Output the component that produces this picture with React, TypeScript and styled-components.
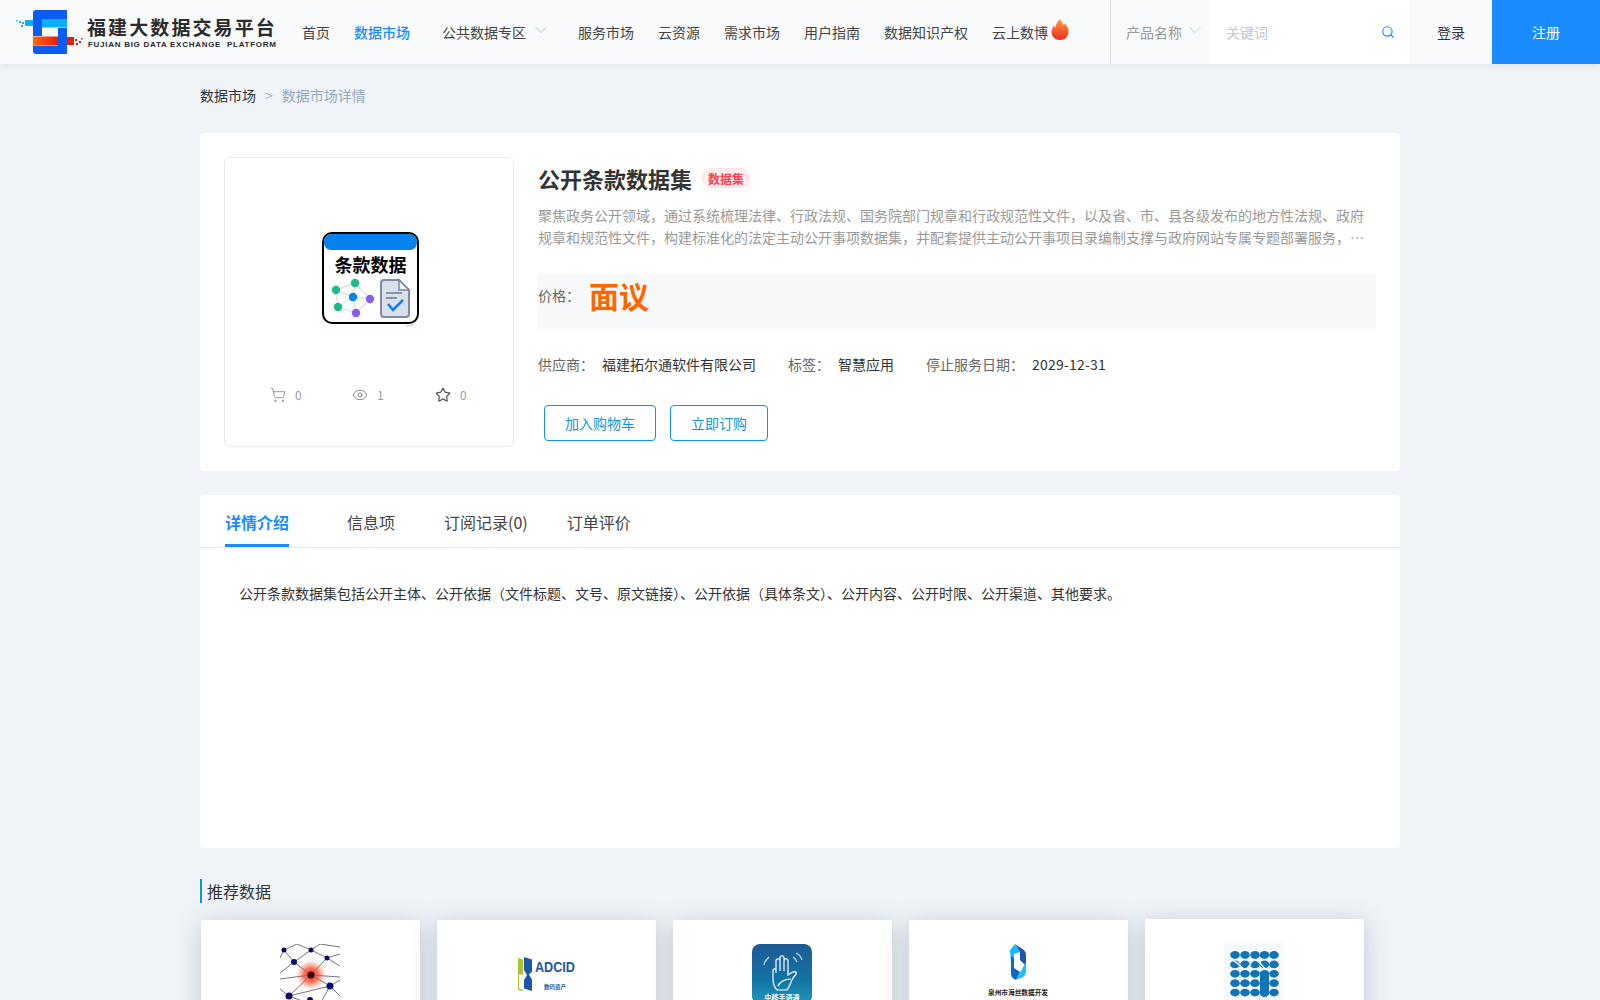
import React from 'react'
import styled, { createGlobalStyle } from 'styled-components'
import { ChevronDown, Eye, Search, ShoppingCart, Star } from 'lucide-react'

const GlobalStyle = createGlobalStyle`
  html, body {
    margin: 0;
    padding: 0;
    overflow: hidden;
    background: #f0f4f8;
    font-family: "Noto Sans CJK SC", "Noto Sans", sans-serif;
    color: #333;
  }
  * {
    box-sizing: border-box;
  }
`

const Page = styled.div`
  height: 1000px;
  overflow: hidden;
`

const Header = styled.header`
  display: flex;
  align-items: stretch;
  height: 64px;
  background: #f9fafc;
  box-shadow: 0 2px 6px rgba(60, 80, 110, 0.08);
  position: relative;
  z-index: 2;
`

const Logo = styled.div`
  display: flex;
  align-items: center;
  width: 302px;
  padding-left: 16px;
  flex: none;
`

const LogoText = styled.div`
  margin-left: 3px;
  display: flex;
  flex-direction: column;
  margin-top: 2px;
`

const LogoTitle = styled.div`
  font-size: 19px;
  line-height: 22px;
  font-weight: 700;
  letter-spacing: 2.1px;
  color: #2b2b2b;
  white-space: nowrap;
`

const LogoSub = styled.div`
  font-family: "Liberation Sans", sans-serif;
  font-size: 8px;
  line-height: 10px;
  font-weight: 700;
  letter-spacing: 0.72px;
  color: #2b2b2b;
  white-space: pre;
  margin-top: 2px;
  margin-left: 1px;
`

const Nav = styled.nav`
  display: flex;
  align-items: center;
  width: 808px;
  flex: none;
`

const NavItem = styled.a<{ $active?: boolean; $gap?: number }>`
  display: flex;
  align-items: center;
  font-size: 14px;
  font-weight: ${({ $active }) => ($active ? 500 : 400)};
  color: ${({ $active }) => ($active ? '#1a8cff' : '#444')};
  margin-right: ${({ $gap }) => $gap ?? 24}px;
  white-space: nowrap;
`

const NavChevron = styled(ChevronDown)`
  margin-left: 5px;
  margin-top: -5px;
  color: #b0b4ba;
`

const FlameWrap = styled.span`
  display: flex;
  margin: -4px 0 0 2px;
`

const SearchArea = styled.div`
  display: flex;
  flex: none;
  width: 300px;
  align-items: stretch;
  border-left: 1px solid #dfe2e6;
`

const SelectBox = styled.div`
  display: flex;
  align-items: center;
  width: 99px;
  padding-left: 15px;
  font-size: 14px;
  color: #999;
  flex: none;
`

const SelectChevron = styled(ChevronDown)`
  margin-left: 3px;
  margin-top: -4px;
  color: #b8bcc2;
`

const KeywordBox = styled.div`
  flex: 1;
  display: flex;
  align-items: center;
  justify-content: space-between;
  background: #fff;
  padding: 0 15px 0 16px;
  font-size: 14px;
  color: #c4c7cc;
`

const LoginLink = styled.a`
  flex: none;
  width: 82px;
  display: flex;
  align-items: center;
  justify-content: center;
  font-size: 14px;
  color: #333;
`

const RegisterLink = styled.a`
  flex: none;
  width: 108px;
  display: flex;
  align-items: center;
  justify-content: center;
  font-size: 14px;
  color: #fff;
  background: #1a8cff;
`

const Main = styled.main`
  width: 1200px;
  margin: 0 auto;
`

const Breadcrumb = styled.div`
  display: flex;
  align-items: center;
  height: 20px;
  margin: 21px 0 28px;
  font-size: 14px;
  color: #333;
`

const CrumbSep = styled.span`
  margin: 0 9px;
  color: #a8b4c2;
`

const CrumbCurrent = styled.span`
  color: #97a8be;
`

const DetailCard = styled.section`
  display: flex;
  gap: 24px;
  height: 338px;
  padding: 24px;
  background: #fff;
  border-radius: 4px;
`

const Gallery = styled.div`
  flex: none;
  width: 290px;
  height: 290px;
  border: 1px solid #e8eaed;
  border-radius: 6px;
  display: flex;
  flex-direction: column;
  align-items: center;
  padding-top: 66px;
`

const ImageFrame = styled.div`
  display: flex;
  margin-left: 4px;
`

const Stats = styled.div`
  display: flex;
  margin-top: 57px;
  width: 100%;
  padding-left: 45px;
`

const Stat = styled.div<{ $width: number }>`
  display: flex;
  align-items: center;
  width: ${({ $width }) => $width}px;
  font-size: 12px;
  color: #999;
  line-height: 16px;

  svg {
    margin-right: 9px;
    flex: none;
  }
`

const Info = styled.div`
  flex: 1;
  min-width: 0;
`

const TitleRow = styled.div`
  display: flex;
  align-items: center;
  height: 42px;
`

const Title = styled.h1`
  margin: 0;
  font-size: 22px;
  line-height: 30px;
  font-weight: 700;
  color: #333;
`

const Badge = styled.span`
  margin-left: 10px;
  width: 48px;
  height: 20px;
  display: flex;
  align-items: center;
  justify-content: center;
  border-radius: 10px;
  background: #ffecee;
  border: 1px solid #ffe0e3;
  color: #f5414d;
  font-size: 12px;
  font-weight: 700;
`

const Description = styled.p`
  margin: 6px 0 0;
  font-size: 14px;
  line-height: 21.5px;
  height: 43px;
  color: #999;
  display: -webkit-box;
  -webkit-line-clamp: 2;
  -webkit-box-orient: vertical;
  overflow: hidden;
`

const PriceBox = styled.div`
  display: flex;
  align-items: flex-start;
  height: 55px;
  margin-top: 26px;
  background: #f7f8fa;
`

const PriceLabel = styled.span`
  font-size: 14px;
  line-height: 20px;
  margin-top: 11px;
  width: 51px;
  color: #666;
`

const PriceValue = styled.span`
  font-size: 30px;
  line-height: 40px;
  margin-top: 1px;
  font-weight: 700;
  color: #ff6600;
`

const MetaRow = styled.div`
  display: flex;
  margin-top: 25px;
  font-size: 14px;
  line-height: 20px;
`

const MetaLabel = styled.span<{ $width: number }>`
  width: ${({ $width }) => $width}px;
  color: #666;
  flex: none;
`

const MetaValue = styled.span<{ $gap: number }>`
  margin-right: ${({ $gap }) => $gap}px;
  color: #333;
`

const DateValue = styled.span`
  color: #333;
  letter-spacing: 0.2px;
`

const Actions = styled.div`
  display: flex;
  gap: 14px;
  margin: 31px 0 0 6px;
`

const OutlineButton = styled.button<{ $width: number }>`
  width: ${({ $width }) => $width}px;
  height: 36px;
  padding: 0;
  background: #fff;
  border: 1px solid #0d95d8;
  border-radius: 4px;
  color: #0d95d8;
  font-family: inherit;
  font-size: 14px;
`

const TabsCard = styled.section`
  height: 353px;
  margin-top: 24px;
  background: #fff;
  border-radius: 4px;
`

const TabBar = styled.div`
  display: flex;
  height: 53px;
  padding-left: 25px;
  border-bottom: 1px solid #e6e8eb;
`

const Tab = styled.div<{ $active?: boolean; $gap: number }>`
  height: 52px;
  margin-right: ${({ $gap }) => $gap}px;
  padding-top: 15px;
  font-size: 16px;
  line-height: 24px;
  font-weight: ${({ $active }) => ($active ? 700 : 400)};
  color: ${({ $active }) => ($active ? '#1a8cff' : '#444')};
  border-bottom: 3px solid ${({ $active }) => ($active ? '#1a8cff' : 'transparent')};
`

const TabBody = styled.div`
  padding: 35px 39px 0;
  font-size: 14px;
  line-height: 20px;
  color: #333;
`

const SectionTitle = styled.h2`
  margin: 31px 0 0;
  height: 24px;
  padding-left: 5px;
  border-left: 2px solid #0d95d8;
  font-size: 16px;
  line-height: 24px;
  font-weight: 400;
  color: #333;
`

const RecommendGrid = styled.div`
  display: grid;
  grid-template-columns: repeat(5, 218.6px);
  column-gap: 17.4px;
  margin: 17px 0 0 1px;
`

const RecommendCard = styled.div<{ $raised?: boolean }>`
  height: 240px;
  padding-top: 24px;
  display: flex;
  justify-content: center;
  background: #fff;
  box-shadow: 0 4px 24px rgba(90, 105, 135, 0.32);
  transform: translateY(${({ $raised }) => ($raised ? -1 : 0)}px);
`

const LogoMark = () => (
  <svg width="68" height="44" viewBox="0 0 68 44">
    <defs>
      <linearGradient id="orange" x1="0" x2="1" y1="0" y2="0">
        <stop offset="0" stopColor="#ff6a00" />
        <stop offset="1" stopColor="#f01800" />
      </linearGradient>
    </defs>
    <path d="M17 3a3 3 0 0 1 3-3H51V9H26V26H17z" fill="#0a5cf5" />
    <rect x="26" y="9" width="25" height="8.500" fill="#0ab0ff" />
    <rect x="42" y="18" width="9" height="26" fill="#0a5cf5" />
    <rect x="17" y="26.500" width="25" height="8.500" fill="url(#orange)" />
    <path d="M17 35.500H51V44H20a3 3 0 0 1-3-3z" fill="#0a5cf5" />
    <rect x="9" y="10" width="8" height="6" fill="#0ab0ff" />
    <rect x="6" y="12" width="2" height="2" fill="#0ab0ff" />
    <rect x="3" y="11" width="2" height="2" fill="#0ab0ff" />
    <rect x="0" y="10" width="1.500" height="1.500" fill="#0ab0ff" />
    <rect x="5" y="15" width="2" height="2" fill="#0ab0ff" />
    <rect x="51" y="27" width="7" height="8" fill="#f01800" />
    <rect x="59" y="29" width="2" height="2" fill="#f01800" />
    <rect x="60" y="33" width="2" height="2" fill="#f01800" />
    <rect x="63" y="31" width="2" height="2" fill="#f01800" />
    <rect x="65" y="28" width="1.500" height="1.500" fill="#f01800" />
  </svg>
)

const Flame = () => (
  <svg width="20" height="24" viewBox="0 0 20 24">
    <defs>
      <linearGradient id="flame" x1="0" x2="0" y1="0" y2="1">
        <stop offset="0" stopColor="#ff9a3c" />
        <stop offset="1" stopColor="#ee2a24" />
      </linearGradient>
    </defs>
    <path
      d="M10.500 1c.8 3.500 2.500 4.500 3.500 6.500.5-.8.6-1.500.6-2.400 2.500 2.500 3.900 5.500 3.900 8.400 0 5-3.700 8.500-8.500 8.500S1.500 18.500 1.500 14c0-2.900 1.600-4.700 2.800-6.500.3 1 .7 1.800 1.400 2.300C5.600 6.500 7.500 3 10.500 1z"
      fill="url(#flame)"
    />
  </svg>
)

const ProductImage = () => (
  <svg width="106" height="106" viewBox="0 0 106 106">
    <rect width="106" height="106" fill="#fdfefb" />
    <rect x="5" y="9" width="95" height="90" rx="9" fill="#fff" stroke="#000" strokeWidth="2" />
    <path d="M6 18a8 8 0 0 1 8-8h77a8 8 0 0 1 8 8v1a7 7 0 0 1-7 7H13a7 7 0 0 1-7-7z" fill="#0582ee" />
    <text x="52.500" y="47.500" textAnchor="middle" fontSize="18" fontWeight="700" fill="#000" fontFamily="Noto Sans CJK SC, sans-serif">
      条款数据
    </text>
    <path
      d="M37 59 L18 66 L20 83 L38 89 L52 75 L37 59 M18 66 L35 73 M37 59 L35 73 M20 83 L35 73 M38 89 L35 73 M52 75 L35 73"
      stroke="#dbe4f2"
      strokeWidth="1.500"
      fill="none"
    />
    <circle cx="37" cy="59" r="4.200" fill="#1dbb8c" />
    <circle cx="18" cy="66" r="4.200" fill="#1dbb8c" />
    <circle cx="20" cy="83" r="4.200" fill="#1dbb8c" />
    <circle cx="35" cy="73" r="4.200" fill="#0582ee" />
    <circle cx="52" cy="75" r="4.200" fill="#8b5cf0" />
    <circle cx="38" cy="89" r="4.200" fill="#8b5cf0" />
    <path d="M66 56h15l10 10v24a3 3 0 0 1-3 3H66a3 3 0 0 1-3-3V59a3 3 0 0 1 3-3z" fill="#d9dfeb" stroke="#7f8ba0" strokeWidth="2" />
    <path d="M81 56v10h10z" fill="#eef1f6" stroke="#7f8ba0" strokeWidth="1.500" />
    <path d="M68 69h16M68 74h11" stroke="#6f7b90" strokeWidth="1.500" />
    <path d="M70 80l5 6 10-10" stroke="#0582ee" strokeWidth="2.500" fill="none" />
    <path d="M88 102q6 0 9-3" stroke="#dbe4ea" strokeWidth="2" fill="none" />
  </svg>
)

const networkNodes: [number, number, number][] = [
  [4, 6, 2.5], [31, 6, 2.5], [14, 18, 3], [47, 14, 2.5], [31, 31, 3.5], [50, 42, 3.5], [9, 52, 3.5], [30, 56, 3],
]

const NetworkThumb = () => (
  <svg width="60" height="60" viewBox="0 0 60 60">
    <defs>
      <radialGradient id="glow">
        <stop offset="0" stopColor="#ff2000" />
        <stop offset="0.5" stopColor="#ff5a40" stopOpacity="0.8" />
        <stop offset="1" stopColor="#ff8a80" stopOpacity="0" />
      </radialGradient>
    </defs>
    <circle cx="31" cy="31" r="15" fill="url(#glow)" />
    <path
      d="M0 14 L4 6 L14 18 L31 6 L47 14 L60 10 M4 6 L17 0 L31 6 L40 0 L60 3 M14 18 L31 31 L47 14 L60 22 M0 29 L14 18 M0 35 L31 31 L60 33 M31 31 L50 42 L60 36 M50 42 L60 52 M31 31 L9 52 L0 45 M9 52 L50 42 M9 52 L30 60 M50 42 L40 60"
      stroke="#777"
      strokeWidth="1"
      fill="none"
    />
    {networkNodes.map(([cx, cy, r]) => (
      <circle key={`${cx}-${cy}`} cx={cx} cy={cy} r={r} fill={cx === 31 && cy === 31 ? '#300' : '#0a0a70'} />
    ))}
  </svg>
)

const AdcidThumb = () => (
  <svg width="60" height="60" viewBox="0 0 60 60">
    <path d="M2 14l5 1.500v15H3v14l4 1.500v1L2 46z" fill="#a9c52b" />
    <path d="M8 13l8 2.500v12l-3 3 3 5V47l-8-2.500V36l3-5-3-5z" fill="#1d57a5" />
    <text x="19" y="28" fontSize="14" fontWeight="700" fill="#1d57a5" fontFamily="Liberation Sans, sans-serif" textLength="40" lengthAdjust="spacingAndGlyphs">
      ADCID
    </text>
    <text x="28" y="44.500" fontSize="5.500" fontWeight="700" fill="#1d57a5" fontFamily="Noto Sans CJK SC, sans-serif">
      数码资产
    </text>
  </svg>
)

const HandThumb = () => (
  <svg width="60" height="60" viewBox="0 0 60 60">
    <defs>
      <linearGradient id="hand" x1="0" x2="0" y1="0" y2="1">
        <stop offset="0" stopColor="#1e5a94" />
        <stop offset="0.6" stopColor="#1274a6" />
        <stop offset="1" stopColor="#2695bd" />
      </linearGradient>
    </defs>
    <rect width="60" height="60" rx="8" fill="url(#hand)" />
    <path
      d="M25 46c-3-3-4-7-4-11v-8c0-3 3-3 3 0v2V17c0-3 4-3 4 0v10V14c0-3 4-3 4 0v13V17c0-3 4-3 4 0v14c3-2 7-4 8-3 1 1-1 4-3 6-2 3-3 8-6 12zM26 42c2-4 7-7 13-7"
      stroke="#fff"
      strokeWidth="1.200"
      fill="none"
    />
    <path d="M41 13c2 1 3 3 4 5M44 9c3 1 5 4 6 7M14 16c-1 2-2 3-2 5M17 13c-2 2-3 3-4 5" stroke="#c7dde8" strokeWidth="1.200" fill="none" />
    <text x="30" y="56" textAnchor="middle" fontSize="7" fontWeight="700" fill="#fff" fontFamily="Noto Sans CJK SC, sans-serif">
      中移手语通
    </text>
  </svg>
)

const QuanzhouThumb = () => (
  <svg width="60" height="60" viewBox="0 0 60 60">
    <path d="M27 0 L36 6 Q38 8 38 12 V22 L32 16 V8z" fill="#1f55b0" />
    <path d="M22 6 L27 0 L32 8 L26 10 V23 L23 20z" fill="#1cb8ff" />
    <path d="M38 18 V28 Q38 31 35 33 L28 36 L33 27z" fill="#20c0ff" />
    <path d="M23 12 L26 14 V24 L32 28 L28 36 L26 35 Q23 33 23 30z" fill="#1168c8" />
    <text x="0" y="51" fontSize="7" fontWeight="700" fill="#222" fontFamily="Noto Sans CJK SC, sans-serif" textLength="60" lengthAdjust="spacingAndGlyphs">
      泉州市海丝数据开发
    </text>
  </svg>
)

const dotRows = [0, 1, 2, 3, 4]
const dotCols = [11, 21, 31, 40.5, 50]

const DotsThumb = () => (
  <svg width="60" height="60" viewBox="0 0 60 60">
    <rect width="60" height="60" fill="#f5f9fc" />
    <g fill="#1374b4">
      {dotRows.flatMap((r) =>
        dotCols.map((x) => <ellipse key={`${r}-${x}`} cx={x} cy={12 + r * 9.4} rx="4.800" ry="3.900" />),
      )}
      <rect x="36" y="28" width="9" height="26" rx="4.500" />
    </g>
    <path d="M6 17c8 0 10 9 15 9s5-9 10-9 7 8 11 9" stroke="#f5f9fc" strokeWidth="1.500" fill="none" />
  </svg>
)

const navItems = ['服务市场', '云资源', '需求市场', '用户指南', '数据知识产权']

export default function App() {
  return (
    <Page>
      <GlobalStyle />
      <Header>
        <Logo>
          <LogoMark />
          <LogoText>
            <LogoTitle>福建大数据交易平台</LogoTitle>
            <LogoSub>FUJIAN BIG DATA EXCHANGE  PLATFORM</LogoSub>
          </LogoText>
        </Logo>
        <Nav>
          <NavItem>首页</NavItem>
          <NavItem $active $gap={32}>数据市场</NavItem>
          <NavItem $gap={27}>
            公共数据专区
            <NavChevron size={20} strokeWidth={0.9} />
          </NavItem>
          {navItems.map((item) => (
            <NavItem key={item}>{item}</NavItem>
          ))}
          <NavItem $gap={0}>
            云上数博
            <FlameWrap>
              <Flame />
            </FlameWrap>
          </NavItem>
        </Nav>
        <SearchArea>
          <SelectBox>
            产品名称
            <SelectChevron size={20} strokeWidth={0.9} />
          </SelectBox>
          <KeywordBox>
            关键词
            <Search size={14} color="#1a8cff" strokeWidth={2} />
          </KeywordBox>
        </SearchArea>
        <LoginLink>登录</LoginLink>
        <RegisterLink>注册</RegisterLink>
      </Header>

      <Main>
        <Breadcrumb>
          数据市场
          <CrumbSep>&gt;</CrumbSep>
          <CrumbCurrent>数据市场详情</CrumbCurrent>
        </Breadcrumb>

        <DetailCard>
          <Gallery>
            <ImageFrame>
              <ProductImage />
            </ImageFrame>
            <Stats>
              <Stat $width={82}>
                <ShoppingCart size={16} strokeWidth={1.100} color="#777" />0
              </Stat>
              <Stat $width={83}>
                <Eye size={16} strokeWidth={1.300} color="#777" />1
              </Stat>
              <Stat $width={60}>
                <Star size={16} strokeWidth={1.800} color="#555" />0
              </Stat>
            </Stats>
          </Gallery>
          <Info>
            <TitleRow>
              <Title>公开条款数据集</Title>
              <Badge>数据集</Badge>
            </TitleRow>
            <Description>
              聚焦政务公开领域，通过系统梳理法律、行政法规、国务院部门规章和行政规范性文件，以及省、市、县各级发布的地方性法规、政府规章和规范性文件，构建标准化的法定主动公开事项数据集，并配套提供主动公开事项目录编制支撑与政府网站专属专题部署服务，助力政府机构高效落实政务公开工作要求，提升公开内容的规范性与时效性。
            </Description>
            <PriceBox>
              <PriceLabel>价格：</PriceLabel>
              <PriceValue>面议</PriceValue>
            </PriceBox>
            <MetaRow>
              <MetaLabel $width={64}>供应商：</MetaLabel>
              <MetaValue $gap={32}>福建拓尔通软件有限公司</MetaValue>
              <MetaLabel $width={50}>标签：</MetaLabel>
              <MetaValue $gap={32}>智慧应用</MetaValue>
              <MetaLabel $width={106}>停止服务日期：</MetaLabel>
              <DateValue>2029-12-31</DateValue>
            </MetaRow>
            <Actions>
              <OutlineButton $width={112}>加入购物车</OutlineButton>
              <OutlineButton $width={98}>立即订购</OutlineButton>
            </Actions>
          </Info>
        </DetailCard>

        <TabsCard>
          <TabBar>
            <Tab $active $gap={58}>详情介绍</Tab>
            <Tab $gap={49}>信息项</Tab>
            <Tab $gap={39}>订阅记录(0)</Tab>
            <Tab $gap={0}>订单评价</Tab>
          </TabBar>
          <TabBody>
            公开条款数据集包括公开主体、公开依据（文件标题、文号、原文链接）、公开依据（具体条文）、公开内容、公开时限、公开渠道、其他要求。
          </TabBody>
        </TabsCard>

        <SectionTitle>推荐数据</SectionTitle>
        <RecommendGrid>
          <RecommendCard>
            <NetworkThumb />
          </RecommendCard>
          <RecommendCard>
            <AdcidThumb />
          </RecommendCard>
          <RecommendCard>
            <HandThumb />
          </RecommendCard>
          <RecommendCard>
            <QuanzhouThumb />
          </RecommendCard>
          <RecommendCard $raised>
            <DotsThumb />
          </RecommendCard>
        </RecommendGrid>
      </Main>
    </Page>
  )
}
